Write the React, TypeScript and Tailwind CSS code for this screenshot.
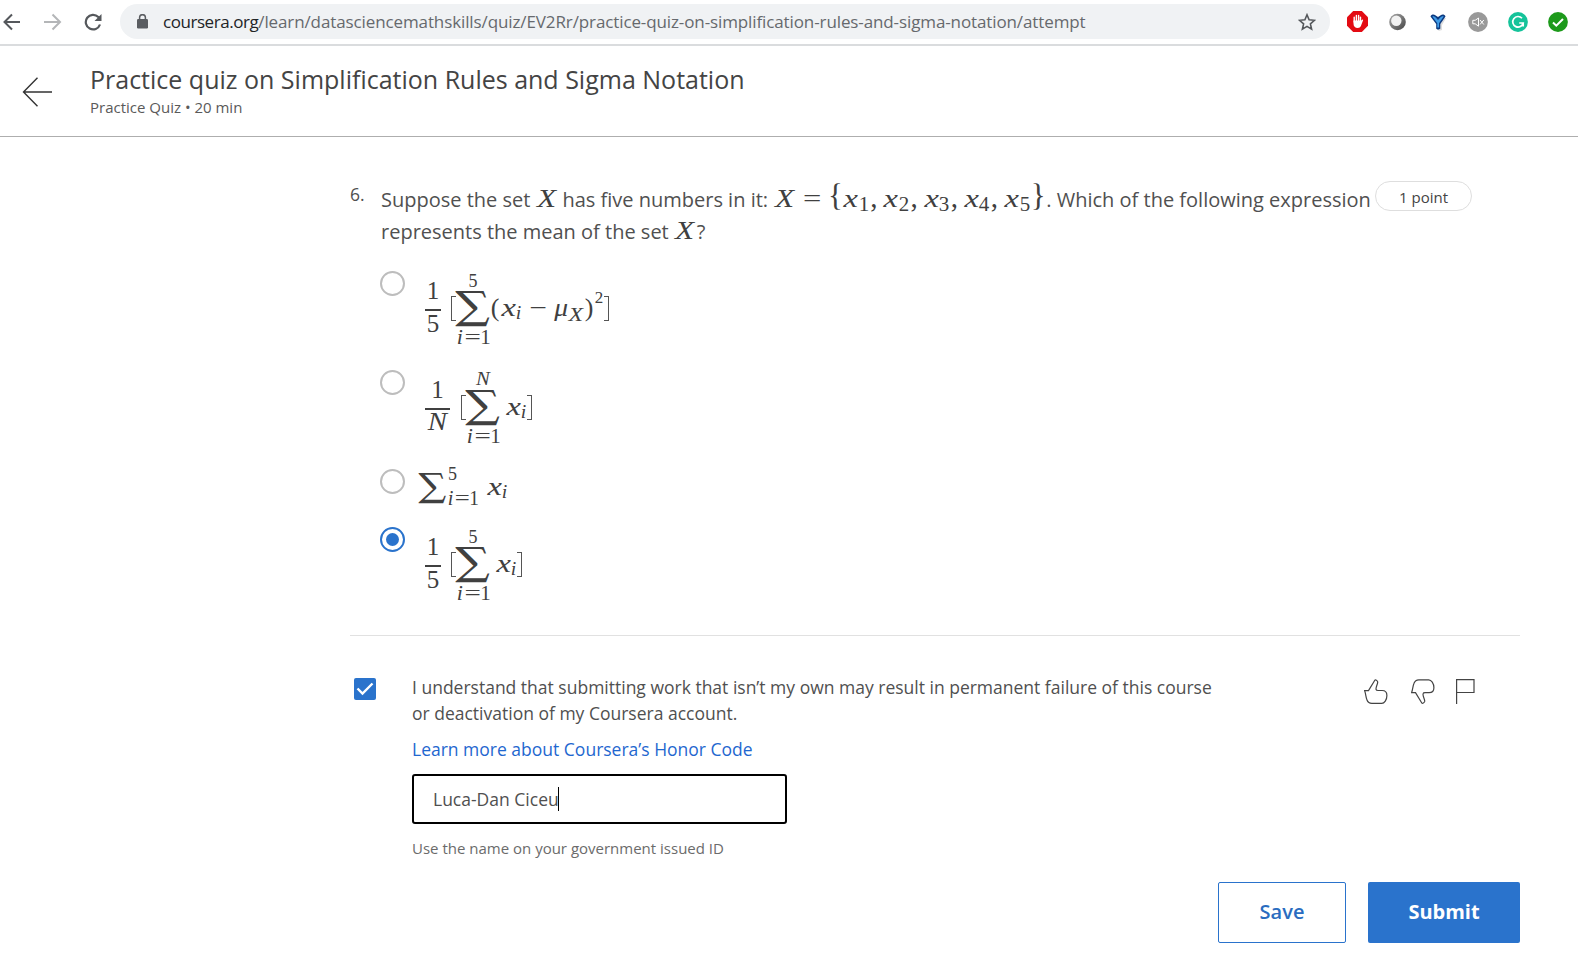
import type { ReactNode } from 'react';

type GlyphProps = { children: ReactNode; box?: string; look?: string };

/* One math symbol centred in a cell of fixed width. */
function Glyph({ children, box = 'w-3', look = 'text-[25px]' }: GlyphProps) {
  return (
    <span className={`inline-flex shrink-0 items-baseline justify-center leading-none ${box}`}>
      <span className={`inline-block origin-bottom whitespace-nowrap ${look}`}>{children}</span>
    </span>
  );
}

function Math({ children }: { children: ReactNode }) {
  return (
    <span className="inline-flex items-baseline font-['Liberation_Serif',serif] text-[#404040]">{children}</span>
  );
}

const bigX = 'text-[25px] italic scale-x-125';
const smallX = 'text-[26px] italic scale-x-[1.25]';

function Fraction({ bottom, wide }: { bottom: string; wide?: boolean }) {
  return (
    <span className={`flex h-[60px] shrink-0 flex-col items-center ${wide ? 'w-[25px]' : 'w-4'}`}>
      <span className="h-[30px] text-[25px] leading-[23px]">1</span>
      <span className="h-[2px] w-full shrink-0 bg-[#404040]" />
      <span className={`h-[28px] text-[25px] ${wide ? 'scale-x-115 leading-[23px] italic' : 'leading-[26px]'}`}>{bottom}</span>
    </span>
  );
}

function Lower() {
  return (
    <span className="flex items-baseline leading-none">
      <Glyph box="w-[8px]" look="text-[20px] italic scale-x-110">i</Glyph>
      <Glyph box="w-[17px]" look="text-[20px] scale-x-[1.45]">=</Glyph>
      <Glyph box="w-[9px]" look="text-[21px]">1</Glyph>
    </span>
  );
}

function Sum({ top }: { top: string }) {
  return (
    <span className="flex w-[34px] shrink-0 flex-col items-center">
      <span className={`h-[18px] text-[18px] leading-[18px] ${top === 'N' ? '-translate-y-px scale-x-115 italic' : ''}`}>{top}</span>
      <span className="flex h-[37px] items-center justify-center font-['DejaVu_Math_TeX_Gyre','DejaVu_Serif',serif] text-[34px] leading-none">
        <span className="scale-x-[1.22]">∑</span>
      </span>
      <span className="flex h-[20px] translate-y-px items-end">
        <Lower />
      </span>
    </span>
  );
}

function Bracket({ right }: { right?: boolean }) {
  return (
    <span
      className={`mb-[2px] h-[25px] w-[5px] shrink-0 border-y border-[#555] ${right ? 'border-r' : 'border-l'}`}
    />
  );
}

function Xi() {
  return (
    <span className="flex items-baseline">
      <Glyph box="w-[15px]" look={smallX}>x</Glyph>
      <Glyph box="w-[6px]" look="text-[18px] italic translate-y-[3px] scale-x-110">i</Glyph>
    </span>
  );
}

function Radio({ checked }: { checked?: boolean }) {
  return (
    <span
      className={`flex size-[25px] shrink-0 items-center justify-center rounded-full border-2 ${checked ? 'border-[#2a73cc]' : 'border-[#bdbdbd]'}`}
    >
      {checked && <span className="size-[13px] rounded-full bg-[#2a73cc]" />}
    </span>
  );
}

function Formula({ children, size = 'pl-5 h-[76px]' }: { children: ReactNode; size?: string }) {
  return (
    <span className={`flex items-center font-['Liberation_Serif',serif] leading-none text-[#404040] ${size}`}>
      {children}
    </span>
  );
}

function BrowserBar() {
  return (
    <div className="flex h-[46px] shrink-0 items-start border-b-2 border-[#dadcde] pt-1">
      <div className="flex h-[35px] w-[120px] items-center">
        <svg className="ml-[3px] size-[18px]" viewBox="0 0 18 18" fill="none" stroke="#55585c" strokeWidth="2">
          <path d="M17 9H2M9 1.5 1.5 9 9 16.5" />
        </svg>
        <svg className="ml-[23px] size-[18px]" viewBox="0 0 18 18" fill="none" stroke="#b4b6b8" strokeWidth="2">
          <path d="M0 9h15M8.500 1.500 16 9l-7.500 7.500" />
        </svg>
        <svg className="ml-[22px] size-[18px]" viewBox="0 0 18 18" fill="none" stroke="#55585c" strokeWidth="2.200">
          <path d="M16 11.500A7.300 7.300 0 1 1 14.300 4L15.500 5.300" />
          <path d="M17.500 1v7h-7z" fill="#55585c" stroke="none" />
        </svg>
      </div>
      <div className="flex h-[35px] w-[1210px] items-center rounded-full bg-[#f0f2f4]">
        <svg className="ml-[17px] h-[15px] w-[11px]" viewBox="0 0 11 15">
          <rect y="5" width="11" height="9.500" rx="1.200" fill="#5a5d61" />
          <path d="M2.600 6V3.600a2.900 2.900 0 0 1 5.800 0V6" fill="none" stroke="#5a5d61" strokeWidth="1.500" />
        </svg>
        <span className="ml-[15px] whitespace-nowrap font-['Open_Sans','Noto_Sans',sans-serif] text-[17px] leading-none text-[#66696d]">
          <span className="tracking-[-0.45px] text-[#222427]">coursera.org</span>
          <span className="tracking-[-0.11px]">
            /learn/datasciencemathskills/quiz/EV2Rr/practice-quiz-on-simplification-rules-and-sigma-notation/attempt
          </span>
        </span>
        <svg className="mr-[14px] ml-auto size-[18px]" viewBox="0 0 18 18" fill="none" stroke="#55585c" strokeWidth="1.600">
          <path d="m9 1.800 2.100 5 5.400.5-4.100 3.600 1.200 5.300L9 13.400l-4.600 2.800 1.200-5.300L1.500 7.300l5.400-.5z" />
        </svg>
      </div>
      <div className="flex h-[35px] items-center gap-5 pl-[17px]">
        <svg className="size-[21px]" viewBox="0 0 21 21">
          <path d="M6.200 0h8.600L21 6.200v8.600L14.800 21H6.200L0 14.800V6.200z" fill="#e30b13" />
          <path
            d="M7.200 11V6.200M9.400 10V4.400M11.600 10V4.400M13.500 11V6.200"
            stroke="#fff"
            strokeWidth="1.400"
            strokeLinecap="round"
          />
          <path d="M6.500 9.500h7.700l1.100-.8c.8-.3 1 .3.700.9L13.900 15c-.6 1.300-1.600 2-3.100 2-2.800 0-4.300-1.600-4.300-4.500z" fill="#fff" />
        </svg>
        <svg className="size-[20px]" viewBox="0 0 20 20">
          <defs>
            <linearGradient id="ring" x1="0" y1="0" x2="1" y2="1">
              <stop offset="0" stopColor="#aaa" />
              <stop offset="1" stopColor="#444" />
            </linearGradient>
          </defs>
          <circle cx="9.500" cy="10" r="8.300" fill="url(#ring)" />
          <circle cx="8.300" cy="8.800" r="5.200" fill="#f2f2f2" />
        </svg>
        <svg className="size-[20px]" viewBox="0 0 20 20">
          <path d="M5 6 10.500 13v6l3.500-1V13l4-7z" fill="#ddd" />
          <path d="M2.500 4.500C3.300 2.300 5.800 2 7.300 3.300L10 5l2.700-1.700c1.500-1.300 4-1 4.800 1.200L12.300 12v4.800L10 17.800l-1.800-1V12z" fill="#0d3a80" />
          <path d="M4.300 4.600c1.200-.8 2.500 0 3.400 1L10 8l2.300-2.400c.9-1 2.200-1.800 3.400-1L11 11.200v4.300H9.300v-4.300z" fill="#3f9be6" />
        </svg>
        <svg className="size-[20px]" viewBox="0 0 20 20">
          <circle cx="10" cy="10" r="9.900" fill="#999" />
          <path d="M4.800 8.300h2.400L10.500 6v8.200l-3.300-2.400H4.800zM12 8l3.800 4.500M15.800 8 12 12.500" fill="none" stroke="#fff" strokeWidth="1" />
        </svg>
        <svg className="size-[20px]" viewBox="0 0 20 20">
          <circle cx="10" cy="10" r="9.900" fill="#15c39a" />
          <path d="M14 6.300A5.300 5.300 0 1 0 15.200 11H11.200M15.200 11v3.600" fill="none" stroke="#fff" strokeWidth="1.700" />
        </svg>
        <svg className="size-[20px]" viewBox="0 0 20 20">
          <circle cx="10" cy="10" r="9.900" fill="#1d9a1b" />
          <path d="m5 10.500 3.300 3.200L15 7" fill="none" stroke="#fff" strokeWidth="2" />
        </svg>
      </div>
    </div>
  );
}

function QuizHeader() {
  return (
    <header className="flex h-[91px] shrink-0 items-start border-b border-[#aeaeae]">
      <svg className="mt-[31px] ml-[22px] h-[30px] w-[30px]" viewBox="0 0 30 30" fill="none" stroke="#333" strokeWidth="1.400">
        <path d="M30 15H1.500M15.500 .7 1.500 15l14 14.300" />
      </svg>
      <div className="ml-[38px] pt-4">
        <h1 className="text-[25px] leading-[34px] text-[#444]">
          Practice quiz on Simplification Rules and Sigma Notation
        </h1>
        <p className="mt-px text-[15px] leading-5 text-[#5a5a5a]">Practice Quiz • 20 min</p>
      </div>
    </header>
  );
}

const digits = ['1', '2', '3', '4', '5'];

function Question() {
  return (
    <section className="ml-[350px] flex h-[110px] w-[1170px] items-start">
      <div className="w-[31px] shrink-0 pt-[43px] text-[17.5px] leading-7 text-[#505050]">6.</div>
      <div className="w-[990px] shrink-0 pt-[44px] text-[20px] text-[#505050]">
        <div className="flex h-8 items-baseline leading-8 whitespace-nowrap">
          <span>Suppose the set</span>
          <Math><Glyph box="w-[32px]" look={bigX}>X</Glyph></Math>
          <span>has five numbers in it:</span>
          <Math>
            <Glyph box="w-[33px]" look={bigX}>X</Glyph>
            <Glyph box="w-[22px]" look="text-[25px] scale-x-[1.3]">=</Glyph>
            <Glyph box="w-[21px] pl-1" look="text-[31px] -translate-y-px">{'{'}</Glyph>
            {digits.map((d) => (
              <span key={d} className="flex items-baseline">
                <Glyph box="w-[14px]" look={smallX}>x</Glyph>
                <Glyph box="w-[11.5px]" look="text-[20px] translate-y-1 scale-x-105">{d}</Glyph>
                {d !== '5' && <Glyph box="w-[14.700px] pr-[6px]" look="text-[29px]">,</Glyph>}
              </span>
            ))}
            <Glyph box="w-[16px]" look="text-[31px] -translate-y-px">{'}'}</Glyph>
          </Math>
          <span>. Which of the following expression</span>
        </div>
        <div className="flex h-[38px] items-baseline leading-[38px] whitespace-nowrap">
          <span>represents the mean of the set</span>
          <Math><Glyph box="w-[28px] pl-[3px]" look={bigX}>X</Glyph></Math>
          <span>?</span>
        </div>
      </div>
      <div className="mt-[44px] ml-1 flex h-[30px] w-[97px] shrink-0 items-center justify-center rounded-full border border-[#dedede] pt-0.5 text-[15px] text-[#444]">
        1 point
      </div>
    </section>
  );
}

function Options() {
  return (
    <div className="ml-[380px] flex h-[388px] shrink-0 flex-col">
      <div className="flex h-[99px] items-start pt-[24px]">
        <Radio />
        <Formula>
          <Fraction bottom="5" />
          <span className="w-[10px]" />
          <Bracket />
          <Sum top="5" />
          <span className="mb-[3px] flex items-baseline">
            <Glyph box="w-[10px]" look="text-[26px]">(</Glyph>
            <span className="w-px" />
            <Xi />
            <Glyph box="w-[32px]" look="text-[25px] scale-x-125">−</Glyph>
            <Glyph box="w-[14px]" look="text-[25px] italic scale-x-110">μ</Glyph>
            <Glyph box="w-[16px]" look="text-[19px] italic translate-y-[5px] scale-x-[1.25]">X</Glyph>
            <Glyph box="w-[10px]" look="text-[26px]">)</Glyph>
            <Glyph box="w-[10px]" look="text-[17px] -translate-y-[13px]">2</Glyph>
          </span>
          <Bracket right />
        </Formula>
      </div>
      <div className="flex h-[99px] items-start pt-[24px]">
        <Radio />
        <Formula>
          <Fraction bottom="N" wide />
          <span className="w-[11px]" />
          <Bracket />
          <Sum top="N" />
          <span className="w-[6px]" />
          <span className="mb-[3px]"><Xi /></span>
          <Bracket right />
        </Formula>
      </div>
      <div className="flex h-[58px] items-start pt-[24px]">
        <Radio />
        <Formula size="pl-[13px] h-[36px]">
          <span className="flex w-[29px] justify-center font-['DejaVu_Math_TeX_Gyre','DejaVu_Serif',serif] text-[29px]">
            <span className="scale-x-[1.15]">∑</span>
          </span>
          <span className="flex w-[36px] flex-col items-start">
            <span className="h-[22px] pl-px text-[18px] leading-[16px]">5</span>
            <span className="flex h-[20px] origin-left scale-x-[0.92] items-center">
              <Lower />
            </span>
          </span>
          <span className="w-[4px]" />
          <Xi />
        </Formula>
      </div>
      <div className="flex h-[115px] items-start pt-[24px]">
        <Radio checked />
        <Formula>
          <Fraction bottom="5" />
          <span className="w-[10px]" />
          <Bracket />
          <Sum top="5" />
          <span className="w-[6px]" />
          <span className="mb-[3px]"><Xi /></span>
          <Bracket right />
        </Formula>
      </div>
    </div>
  );
}

function HonorCode() {
  return (
    <div className="ml-[350px] flex w-[1170px] items-start border-t border-[#e1e1e1] pt-[42px]">
      <span className="ml-[4px] flex size-[22px] shrink-0 items-center justify-center rounded-[2px] bg-[#2a73cc]">
        <svg className="h-[14px] w-[18px]" viewBox="0 0 18 14" fill="none" stroke="#fff" strokeWidth="2.400">
          <path d="m1.500 6.500 5 5L16.500 1.500" />
        </svg>
      </span>
      <div className="-mt-1 ml-[36px] w-[810px] text-[17.5px] text-[#505050]">
        <p className="leading-[26px]">
          I understand that submitting work that isn’t my own may result in permanent failure of this course
          <br />
          or deactivation of my Coursera account.
        </p>
        <a className="mt-[10px] block leading-[26px] text-[#1f67cf]">Learn more about Coursera’s Honor Code</a>
        <div className="mt-3 flex h-[50px] w-[375px] items-center rounded-[3px] border-2 border-black pl-[19px]">
          <span>Luca-Dan Ciceu</span>
          <span className="-ml-px h-6 w-px bg-black" />
        </div>
        <p className="mt-[14px] text-[15px] leading-5 text-[#6b6b6b]">Use the name on your government issued ID</p>
      </div>
      <div className="ml-[142px] flex gap-[22px] pt-px">
        <svg className="size-[25px]" viewBox="0 0 25 25" fill="none" stroke="#444" strokeWidth="1.200">
          <path d="M.6 11.600H4.500L10.800 1.200c.6-1 2.600.4 2.900 1.600.3 2-2.300 5.600-1.600 7.700.2.900 1 1 2 1h4c3 0 4.800 2.200 4.800 4.900 0 4.500-2.600 8-5.200 8H7.800c-2.300 0-4-1.300-4.800-3.400C1.700 18 2 15.300.6 11.600z" />
        </svg>
        <svg className="size-[25px]" viewBox="0 0 25 25" fill="none" stroke="#444" strokeWidth="1.200">
          <path d="M.6 13.600H4.500L10.800 24c.6.900 2.600-.4 2.900-1.600.3-2-2.300-5.600-1.600-7.700.2-.9 1-1 2-1h4c3 0 4.800-2.200 4.800-4.900 0-4.500-2.600-8-5.200-8H7.800C5.500.8 3.800 2.100 3 4.200 1.700 7.200 2 9.900.6 13.600z" />
        </svg>
        <svg className="-ml-[2px] size-[25px]" viewBox="0 0 25 25" fill="none" stroke="#444" strokeWidth="1.200">
          <path d="M.6 25V.6H18V13.500H.6" />
        </svg>
      </div>
    </div>
  );
}

export default function App() {
  return (
    <div className="flex h-[964px] w-[1578px] flex-col overflow-hidden bg-white font-['Open_Sans',sans-serif]">
      <BrowserBar />
      <QuizHeader />
      <Question />
      <Options />
      <HonorCode />
      <div className="mt-[24px] ml-[1218px] flex gap-[22px] text-[20px]">
        <button className="flex h-[61px] w-[128px] items-center justify-center rounded-[2px] border border-[#2a73cc] pb-0.5 font-semibold text-[#2a6cc0]">
          Save
        </button>
        <button className="flex h-[61px] w-[152px] items-center justify-center rounded-[2px] bg-[#2a73cc] pb-0.5 font-bold text-white">
          Submit
        </button>
      </div>
    </div>
  );
}
